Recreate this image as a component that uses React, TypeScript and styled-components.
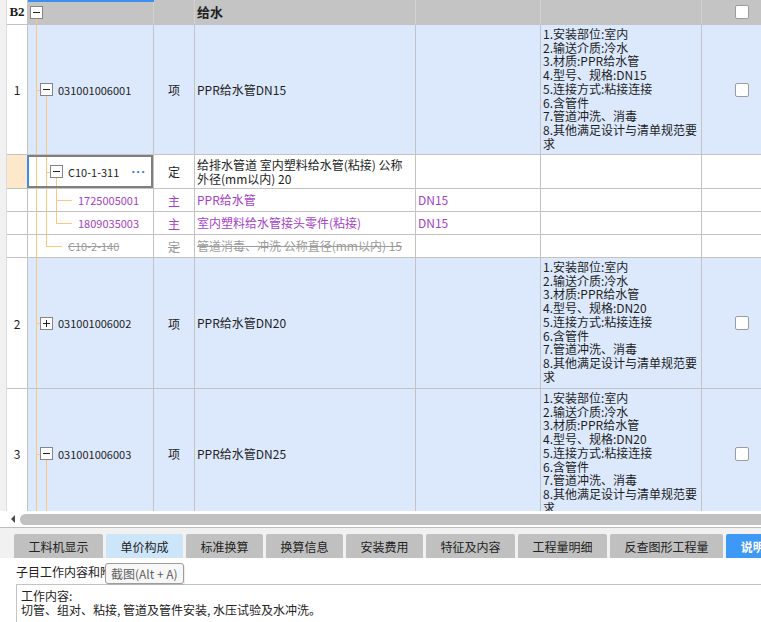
import React from "react";
import styled, { createGlobalStyle, css } from "styled-components";

const GlobalStyle = createGlobalStyle`
  html, body {
    margin: 0;
    padding: 0;
    background: #fff;
    overflow: hidden;
  }
  body {
    font-family: "Noto Sans CJK SC", "Noto Sans", sans-serif;
    font-size: 12px;
    color: #1e1e1e;
  }
`;

const GRID = "7px 21px 126px 41px 221px 125px 161px 80px";
const LINE = "#c3c3c3";
const TREE = "#fcc77e";
const PURPLE = "#a63fc6";

type Tone = "head" | "main" | "plain";

const Page = styled.div`
  width: 761px;
  height: 622px;
  display: flex;
  flex-direction: column;
  overflow: hidden;
`;

const Viewport = styled.div`
  height: 511px;
  overflow: hidden;
  flex-shrink: 0;
`;

const Row = styled.div<{ $h: number }>`
  display: grid;
  grid-template-columns: ${GRID};
  height: ${(p) => p.$h}px;
  width: 782px;
`;

const Gutter = styled.div`
  background: #f1f1f1;
  border-right: 1px solid #dcdcdc;
`;

const cellBase = css<{ $tone: Tone }>`
  box-sizing: border-box;
  border-right: 1px solid ${(p) => (p.$tone === "head" ? "#d2d2d2" : LINE)};
  border-bottom: 1px solid ${LINE};
  background: ${(p) =>
    p.$tone === "head" ? "#c4c4c4" : p.$tone === "main" ? "#dce9fc" : "#fff"};
  overflow: hidden;
  min-width: 0;
`;

const NumCell = styled.div<{ $peach?: boolean; $bold?: boolean }>`
  box-sizing: border-box;
  border-right: 1px solid ${LINE};
  border-bottom: 1px solid ${LINE};
  background: ${(p) => (p.$peach ? "#fde8cc" : "#fff")};
  display: flex;
  align-items: center;
  justify-content: center;
  font-weight: ${(p) => (p.$bold ? 700 : 400)};
  font-family: ${(p) =>
    p.$bold ? '"Liberation Serif", "Noto Sans CJK SC", serif' : "inherit"};
  font-size: ${(p) => (p.$bold ? "13px" : "12px")};
`;

const CodeCell = styled.div<{ $tone: Tone; $indent: number; $selected?: boolean; $muted?: boolean; $purple?: boolean }>`
  ${cellBase};
  position: relative;
  display: flex;
  align-items: center;
  white-space: nowrap;
  padding-left: ${(p) => p.$indent}px;
  font-size: 11px;
  color: ${(p) => (p.$muted ? "#9c9c9c" : p.$purple ? PURPLE : "#1e1e1e")};
  text-decoration: ${(p) => (p.$muted ? "line-through" : "none")};
  overflow: visible;
  ${(p) =>
    p.$tone === "head" &&
    css`
      &::before {
        content: "";
        position: absolute;
        left: 0;
        right: -1px;
        top: 0;
        height: 2px;
        background: #3d8fef;
      }
    `}
  ${(p) =>
    p.$selected &&
    css`
      &::after {
        content: "";
        position: absolute;
        top: 0;
        right: 0;
        bottom: 0;
        left: -1px;
        border: 2px solid #7f7f7f;
        border-left-color: #3d8fef;
        pointer-events: none;
      }
    `}
`;

const VLine = styled.span<{ $x: number; $top?: string; $bottom?: string }>`
  position: absolute;
  left: ${(p) => p.$x}px;
  top: ${(p) => p.$top ?? "0"};
  bottom: ${(p) => p.$bottom ?? "0"};
  width: 1px;
  background: ${TREE};
`;

const HLine = styled.span<{ $x: number; $w: number }>`
  position: absolute;
  left: ${(p) => p.$x}px;
  top: 50%;
  width: ${(p) => p.$w}px;
  height: 1px;
  background: ${TREE};
`;

const Toggle = styled.span<{ $open: boolean }>`
  position: relative;
  box-sizing: border-box;
  width: 13px;
  height: 13px;
  flex-shrink: 0;
  background: #fff;
  border: 1px solid #858585;
  margin-right: 5px;
  z-index: 1;
  &::before {
    content: "";
    position: absolute;
    left: 2px;
    right: 2px;
    top: 5px;
    height: 1px;
    background: #222;
  }
  ${(p) =>
    !p.$open &&
    css`
      &::after {
        content: "";
        position: absolute;
        top: 2px;
        bottom: 2px;
        left: 5px;
        width: 1px;
        background: #222;
      }
    `}
`;

const Dots = styled.span`
  margin-left: auto;
  margin-right: 7px;
  color: #2f80d8;
  font-family: "Liberation Sans", sans-serif;
  font-weight: 700;
  font-size: 13px;
  letter-spacing: 0.5px;
`;

const UnitCell = styled.div<{ $tone: Tone; $muted?: boolean; $purple?: boolean }>`
  ${cellBase};
  display: flex;
  align-items: center;
  justify-content: center;
  color: ${(p) => (p.$muted ? "#9c9c9c" : p.$purple ? PURPLE : "#1e1e1e")};
  text-decoration: ${(p) => (p.$muted ? "line-through" : "none")};
`;

const TextCell = styled.div<{ $tone: Tone; $muted?: boolean; $purple?: boolean; $bold?: boolean }>`
  ${cellBase};
  display: flex;
  align-items: center;
  padding: 0 2px;
  line-height: 14px;
  font-weight: ${(p) => (p.$bold ? 700 : 400)};
  font-size: ${(p) => (p.$bold ? "13px" : "12px")};
  color: ${(p) => (p.$muted ? "#9c9c9c" : p.$purple ? PURPLE : "#1e1e1e")};
  text-decoration: ${(p) => (p.$muted ? "line-through" : "none")};
  white-space: ${(p) => (p.$muted ? "nowrap" : "normal")};
`;

const FeatureCell = styled.div<{ $tone: Tone }>`
  ${cellBase};
  padding: 2px 2px 0;
  line-height: 13.7px;
  font-size: 12px;
  white-space: pre-line;
`;

const CheckCell = styled.div<{ $tone: Tone }>`
  ${cellBase};
  border-right: none;
  display: flex;
  align-items: center;
  justify-content: center;
`;

const Check = styled.span`
  box-sizing: border-box;
  width: 14px;
  height: 14px;
  border: 1px solid #9c9c9c;
  border-radius: 2px;
  background: #fff;
`;

const ScrollBar = styled.div`
  height: 16px;
  flex-shrink: 0;
  display: flex;
  align-items: center;
  padding-left: 11px;
  gap: 5px;
  border-bottom: 1px solid #bdbdbd;
  background: #fff;
`;

const Arrow = styled.span`
  width: 0;
  height: 0;
  border-top: 4px solid transparent;
  border-bottom: 4px solid transparent;
  border-right: 4px solid #4a4a4a;
`;

const Thumb = styled.span`
  flex: 1;
  height: 11px;
  border-radius: 6px 0 0 6px;
  background: #c1c1c1;
`;

const Panel = styled.div`
  background: #f1f1f1;
  padding: 6px 0 0 14px;
  flex-shrink: 0;
`;

const TabBar = styled.div`
  display: flex;
  gap: 3px;
  white-space: nowrap;
`;

const Tab = styled.div<{ $state?: "hover" | "active" }>`
  height: 24px;
  flex-shrink: 0;
  padding: 0 14.5px;
  display: flex;
  align-items: center;
  border-radius: 2px 2px 0 0;
  font-size: 12px;
  background: ${(p) =>
    p.$state === "active" ? "#3d98f6" : p.$state === "hover" ? "#cde5f8" : "#c0c0c0"};
  color: ${(p) => (p.$state === "active" ? "#fff" : "#222")};
  font-weight: ${(p) => (p.$state === "active" ? 700 : 400)};
`;

const Content = styled.div`
  position: relative;
  flex: 1;
  background: #fff;
`;

const Label = styled.div`
  height: 26px;
  display: flex;
  align-items: center;
  padding-left: 16px;
  font-size: 12px;
  color: #222;
`;

const TextBox = styled.div`
  margin-left: 16px;
  border-top: 1px solid #c3c3c3;
  border-left: 1px solid #c3c3c3;
  padding: 4px 4px 0;
  line-height: 14px;
  font-size: 12px;
  color: #222;
  height: 60px;
`;

const TextLine = styled.div`
  white-space: nowrap;
`;

const Tip = styled.div`
  position: absolute;
  left: 105px;
  top: 5px;
  box-sizing: border-box;
  height: 21px;
  padding: 0 5px;
  display: flex;
  align-items: center;
  border: 1px solid #9d9d9d;
  border-radius: 3px;
  background: #f7f7f7;
  color: #5e5e5e;
  font-size: 12px;
  box-shadow: 1px 1px 1px rgba(0, 0, 0, 0.08);
`;

const features = (size: string) =>
  [
    "1.安装部位:室内",
    "2.输送介质:冷水",
    "3.材质:PPR给水管",
    `4.型号、规格:${size}`,
    "5.连接方式:粘接连接",
    "6.含管件",
    "7.管道冲洗、消毒",
    "8.其他满足设计与清单规范要求",
  ].join("\n");

type ItemProps = {
  num: string;
  code: string;
  name: string;
  size: string;
  open: boolean;
  h: number;
  tail: boolean;
};

const ItemRow = ({ num, code, name, size, open, h, tail }: ItemProps) => (
  <Row $h={h}>
    <Gutter />
    <NumCell>{num}</NumCell>
    <CodeCell $tone="main" $indent={12}>
      <VLine $x={8} />
      <HLine $x={8} $w={4} />
      {tail && <VLine $x={18} $top="calc(50% + 6px)" />}
      <Toggle $open={open} />
      {code}
    </CodeCell>
    <UnitCell $tone="main">项</UnitCell>
    <TextCell $tone="main">{name}</TextCell>
    <TextCell $tone="main" />
    <FeatureCell $tone="main">{features(size)}</FeatureCell>
    <CheckCell $tone="main">
      <Check />
    </CheckCell>
  </Row>
);

const tabs = [
  "工料机显示",
  "单价构成",
  "标准换算",
  "换算信息",
  "安装费用",
  "特征及内容",
  "工程量明细",
  "反查图形工程量",
  "说明信息",
];

export default function App() {
  return (
    <Page>
      <GlobalStyle />
      <Viewport>
        <Row $h={25}>
          <Gutter />
          <NumCell $bold>B2</NumCell>
          <CodeCell $tone="head" $indent={2}>
            <VLine $x={8} $top="calc(50% + 6px)" />
            <Toggle $open />
          </CodeCell>
          <UnitCell $tone="head" />
          <TextCell $tone="head" $bold>
            给水
          </TextCell>
          <TextCell $tone="head" />
          <TextCell $tone="head" />
          <CheckCell $tone="head">
            <Check />
          </CheckCell>
        </Row>

        <ItemRow num="1" code="031001006001" name="PPR给水管DN15" size="DN15" open h={130} tail />

        <Row $h={34}>
          <Gutter />
          <NumCell $peach />
          <CodeCell $tone="plain" $indent={22} $selected>
            <VLine $x={8} />
            <VLine $x={18} />
            <HLine $x={18} $w={4} />
            <VLine $x={28} $top="calc(50% + 6px)" />
            <Toggle $open />
            C10-1-311
            <Dots>···</Dots>
          </CodeCell>
          <UnitCell $tone="plain">定</UnitCell>
          <TextCell $tone="plain">给排水管道 室内塑料给水管(粘接) 公称外径(mm以内) 20</TextCell>
          <TextCell $tone="plain" />
          <TextCell $tone="plain" />
          <CheckCell $tone="plain" />
        </Row>

        <Row $h={23}>
          <Gutter />
          <NumCell />
          <CodeCell $tone="plain" $indent={50} $purple>
            <VLine $x={8} />
            <VLine $x={18} />
            <VLine $x={28} />
            <HLine $x={28} $w={16} />
            1725005001
          </CodeCell>
          <UnitCell $tone="plain" $purple>
            主
          </UnitCell>
          <TextCell $tone="plain" $purple>
            PPR给水管
          </TextCell>
          <TextCell $tone="plain" $purple>
            DN15
          </TextCell>
          <TextCell $tone="plain" />
          <CheckCell $tone="plain" />
        </Row>

        <Row $h={23}>
          <Gutter />
          <NumCell />
          <CodeCell $tone="plain" $indent={50} $purple>
            <VLine $x={8} />
            <VLine $x={18} />
            <VLine $x={28} $bottom="50%" />
            <HLine $x={28} $w={16} />
            1809035003
          </CodeCell>
          <UnitCell $tone="plain" $purple>
            主
          </UnitCell>
          <TextCell $tone="plain" $purple>
            室内塑料给水管接头零件(粘接)
          </TextCell>
          <TextCell $tone="plain" $purple>
            DN15
          </TextCell>
          <TextCell $tone="plain" />
          <CheckCell $tone="plain" />
        </Row>

        <Row $h={23}>
          <Gutter />
          <NumCell />
          <CodeCell $tone="plain" $indent={40} $muted>
            <VLine $x={8} />
            <VLine $x={18} $bottom="50%" />
            <HLine $x={18} $w={16} />
            C10-2-140
          </CodeCell>
          <UnitCell $tone="plain" $muted>
            定
          </UnitCell>
          <TextCell $tone="plain" $muted>
            管道消毒、冲洗 公称直径(mm以内) 15
          </TextCell>
          <TextCell $tone="plain" />
          <TextCell $tone="plain" />
          <CheckCell $tone="plain" />
        </Row>

        <ItemRow num="2" code="031001006002" name="PPR给水管DN20" size="DN20" open={false} h={131} tail={false} />
        <ItemRow num="3" code="031001006003" name="PPR给水管DN25" size="DN20" open h={130} tail />
      </Viewport>

      <ScrollBar>
        <Arrow />
        <Thumb />
      </ScrollBar>

      <Panel>
        <TabBar>
          {tabs.map((t, i) => (
            <Tab key={t} $state={i === 1 ? "hover" : i === tabs.length - 1 ? "active" : undefined}>
              {t}
            </Tab>
          ))}
        </TabBar>
      </Panel>

      <Content>
        <Label>子目工作内容和附注信息</Label>
        <TextBox>
          <TextLine>工作内容:</TextLine>
          <TextLine>切管、组对、粘接, 管道及管件安装, 水压试验及水冲洗。</TextLine>
        </TextBox>
        <Tip>截图(Alt + A)</Tip>
      </Content>
    </Page>
  );
}
